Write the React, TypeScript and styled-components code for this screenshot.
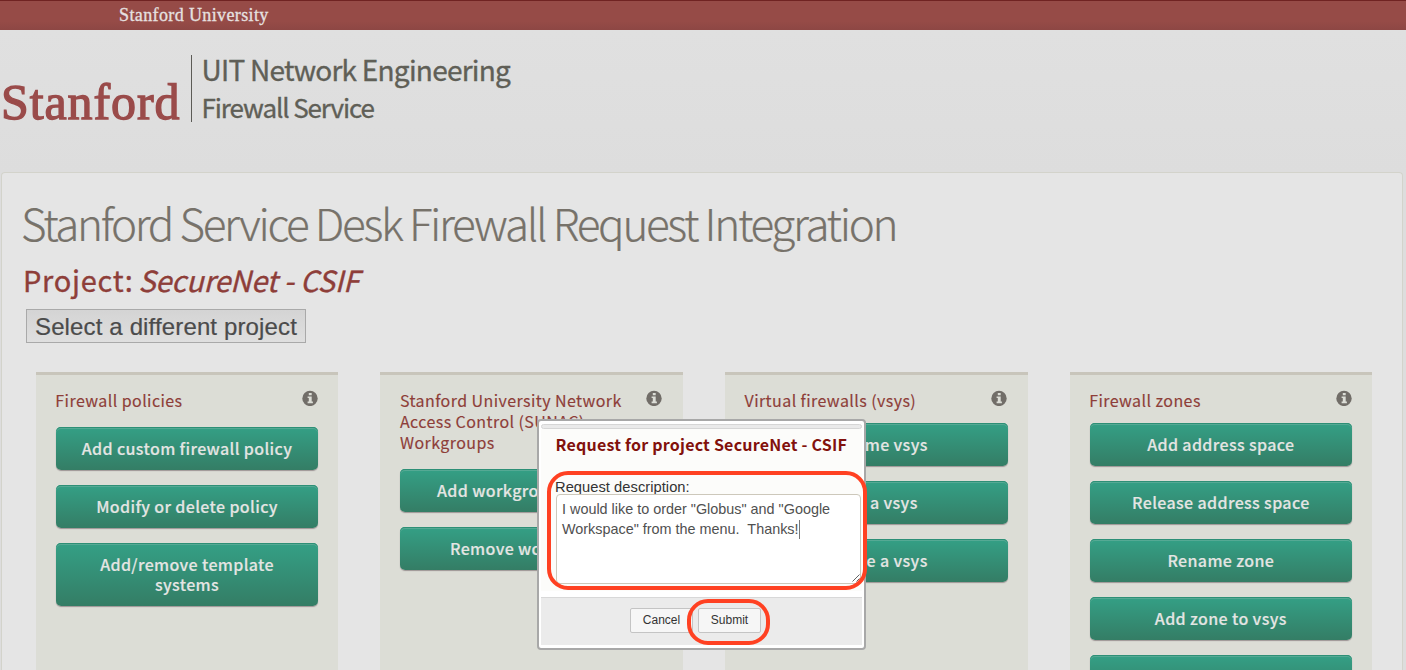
import React from 'react';
import styled, { createGlobalStyle } from 'styled-components';

const sans = `"Noto Sans CJK SC", "Noto Sans CJK JP", "Noto Sans", sans-serif`;
const helvetica = `"Liberation Sans", Arial, sans-serif`;
const serif = `"Liberation Serif", "Times New Roman", serif`;

const GlobalStyle = createGlobalStyle`
  *, *::before, *::after { box-sizing: border-box; }
  html, body { margin: 0; height: 100%; overflow: hidden; background: #dfdfdf; }
`;

const Page = styled.div`
  position: relative;
  width: 1406px;
  height: 670px;
  overflow: hidden;
  display: flex;
  flex-direction: column;
  font-family: ${sans};
  background: linear-gradient(#e0e0e0 30px, #dddddd 172px);
`;

const BrandBar = styled.div`
  flex: none;
  height: 30px;
  padding-left: 119px;
  border-top: 1px solid #702322;
  background: linear-gradient(#964b47 70%, #8d4744);
  color: #e6e1e0;
  font: 18px/29px ${serif};
  letter-spacing: 0.38px;
  -webkit-text-stroke: 0.3px #e6e1e0;
`;

const Header = styled.header`
  flex: none;
  height: 142px;
  padding: 25px 0 0 1px;
  display: flex;
  align-items: flex-start;
`;

const Wordmark = styled.div`
  width: 190px;
  padding-top: 19px;
  font: 50px/56px ${serif};
  letter-spacing: 0.9px;
  color: #9a4b4a;
  -webkit-text-stroke: 1.3px #9a4b4a;
  white-space: nowrap;
`;

const Lockup = styled.div`
  height: 67px;
  padding-left: 9.6px;
  border-left: 1px solid #5c5b56;
  color: #605f57;
  -webkit-text-stroke: 0.35px #605f57;
  white-space: nowrap;
`;

const SiteName = styled.div`
  font-size: 28px;
  line-height: 28px;
  letter-spacing: -0.76px;
`;

const SiteSub = styled.div`
  padding-top: 7px;
  font-size: 26px;
  line-height: 34px;
  letter-spacing: -1.12px;
`;

const Main = styled.main`
  flex: 1;
  margin: 0 3px 0 1px;
  padding: 21px 0 0 19px;
  border: 1px solid #d3d3cb;
  border-bottom: 0;
  border-radius: 4px 4px 0 0;
  background: #e5e5e5;
  display: flex;
  flex-direction: column;
  align-items: flex-start;
`;

const Title = styled.h1`
  margin: 0;
  font-size: 44px;
  line-height: 56px;
  font-weight: 300;
  letter-spacing: -2.32px;
  color: #77726a;
  -webkit-text-stroke: 0.2px #77726a;
  white-space: nowrap;
`;

const Project = styled.h2`
  margin: 9px 0 0 2px;
  font-size: 29px;
  line-height: 40px;
  font-weight: 400;
  letter-spacing: 0.72px;
  color: #8e3e39;
  -webkit-text-stroke: 0.35px #8e3e39;
  white-space: nowrap;

  em {
    margin-left: -2.6px;
    letter-spacing: -0.14px;
  }
`;

const SelectButton = styled.button`
  margin: 10px 0 0 5px;
  width: 280px;
  height: 34px;
  padding: 2px 0 0;
  border: 1px solid #a9a9a9;
  background: linear-gradient(#d4d4d4, #dfdfdf);
  color: #4b4b4b;
  font: 24px/30px ${helvetica};
  letter-spacing: 0.14px;
  -webkit-text-stroke: 0.2px #4b4b4b;
  white-space: nowrap;
`;

const Cards = styled.div`
  flex: 1;
  margin: 29px 0 0 14.75px;
  display: grid;
  grid-template-columns: repeat(4, 302.6px);
  gap: 42px;
`;

const Card = styled.section`
  padding: 15px 20px 0;
  border-top: 3px solid #c8c5bb;
  background: #dcddd6;
`;

const CardHead = styled.div<{ $gap: number }>`
  display: flex;
  justify-content: space-between;
  align-items: flex-start;
  margin-bottom: ${p => p.$gap}px;
`;

const CardTitle = styled.h3`
  margin: 0 0 0 -0.4px;
  width: 236px;
  font-size: 16px;
  line-height: 21px;
  font-weight: 400;
  letter-spacing: 0.42px;
  color: #8e3e39;
  -webkit-text-stroke: 0.15px #8e3e39;
`;

const Info = styled.svg`
  flex: none;
  width: 16px;
  height: 16px;
  margin-right: 0.6px;
`;

const Action = styled.button`
  display: block;
  width: 100%;
  margin: 0 0 15px;
  padding: 11px 22px 12px;
  border: 0;
  border-radius: 5px;
  background: linear-gradient(#349e84 5%, #347d65);
  box-shadow: inset 0 1px 0 #2d8f76, inset 0 2px 0 #55a994, 0 1px 1px rgba(80, 60, 70, 0.45);
  color: #e4e5e3;
  font-family: ${sans};
  font-size: 16px;
  line-height: 20px;
  font-weight: 500;
  letter-spacing: 0.36px;
  -webkit-text-stroke: 0.15px #e4e5e3;
`;

const Dialog = styled.div`
  position: absolute;
  left: 537px;
  top: 419px;
  width: 329px;
  height: 231px;
  padding: 3px 2px;
  border: 2px solid #a8a8a8;
  border-radius: 4px;
  background: #fff;
  display: flex;
  flex-direction: column;
`;

const DragBar = styled.div`
  height: 5px;
  border: 1px solid #d6d6d6;
  border-radius: 4px;
  background: #eaeaea;
`;

const DialogBody = styled.div`
  height: 162px;
  padding: 4px 1px 0 15px;
  background: #fcfcfa;
`;

const DialogTitle = styled.h4`
  margin: 0 0 25px -0.5px;
  font-size: 16px;
  line-height: 22px;
  font-weight: 700;
  letter-spacing: 0.22px;
  color: #82110c;
  white-space: nowrap;
`;

const Label = styled.label`
  display: block;
  height: 14px;
  margin-left: -1px;
  font: 14.7px/15px ${helvetica};
  letter-spacing: 0.04px;
  color: #333;
`;

const Field = styled.div`
  position: relative;
  height: 90px;
  padding: 4px 5px;
  border: 1px solid #cdc8bb;
  border-radius: 4px;
  background: #fff;
  color: #505050;
  font: 14.4px/20px ${helvetica};
  white-space: pre;
`;

const Caret = styled.span`
  display: inline-block;
  width: 1px;
  height: 19px;
  vertical-align: -5px;
  background: #777;
`;

const Grip = styled.svg`
  position: absolute;
  right: 0;
  bottom: 1px;
  width: 8px;
  height: 8px;
`;

const DialogFooter = styled.div`
  height: 48px;
  margin-top: 6px;
  padding: 10px 0 0 89px;
  border-top: 1px solid #d8d8d8;
  background: #ebebeb;
  display: flex;
  gap: 5px;
`;

const SmallButton = styled.button`
  width: 63px;
  height: 25px;
  padding: 0 0 1px;
  border: 1px solid #c4c4c4;
  border-radius: 2px;
  background: #f6f6f6;
  color: #333;
  font: 12px/20px ${helvetica};
`;

const Highlight = styled.div<{ $x: number; $y: number; $w: number; $h: number }>`
  position: absolute;
  left: ${p => p.$x}px;
  top: ${p => p.$y}px;
  width: ${p => p.$w}px;
  height: ${p => p.$h}px;
  border: 4px solid #ff4122;
  border-radius: 21px;
`;

const groups = [
  { title: 'Firewall policies', gap: 16, actions: ['Add custom firewall policy', 'Modify or delete policy', 'Add/remove template systems'] },
  { title: 'Stanford University Network Access Control (SUNAC) Workgroups', gap: 16, actions: ['Add workgroups to vsys', 'Remove workgroups'] },
  { title: 'Virtual firewalls (vsys)', gap: 12, actions: ['Rename vsys', 'Add a vsys', 'Delete a vsys'] },
  { title: 'Firewall zones', gap: 12, actions: ['Add address space', 'Release address space', 'Rename zone', 'Add zone to vsys', 'Delete zone'] },
];

const InfoIcon = () => (
  <Info viewBox="0 0 16 16">
    <circle cx="8" cy="8.4" r="7.7" fill="#716d68" />
    <path d="M6.8 3h2.9v2.3H6.8zM5.6 6.5h4.1v5.1h1.2v1.6H5.6v-1.6h1.2V8.1H5.6z" fill="#dcddd6" />
  </Info>
);

export default function App() {
  return (
    <>
      <GlobalStyle />
      <Page>
        <BrandBar>Stanford University</BrandBar>
        <Header>
          <Wordmark>Stanford</Wordmark>
          <Lockup>
            <SiteName>UIT Network Engineering</SiteName>
            <SiteSub>Firewall Service</SiteSub>
          </Lockup>
        </Header>
        <Main>
          <Title>Stanford Service Desk Firewall Request Integration</Title>
          <Project>Project: <em>SecureNet - CSIF</em></Project>
          <SelectButton>Select a different project</SelectButton>
          <Cards>
            {groups.map(g => (
              <Card key={g.title}>
                <CardHead $gap={g.gap}>
                  <CardTitle>{g.title}</CardTitle>
                  <InfoIcon />
                </CardHead>
                {g.actions.map(a => <Action key={a}>{a}</Action>)}
              </Card>
            ))}
          </Cards>
        </Main>
        <Dialog>
          <DragBar />
          <DialogBody>
            <DialogTitle>Request for project SecureNet - CSIF</DialogTitle>
            <Label>Request description:</Label>
            <Field>
              {'I would like to order "Globus" and "Google\nWorkspace" from the menu.  Thanks!'}
              <Caret />
              <Grip viewBox="0 0 8 8" stroke="#555" strokeWidth="0.9">
                <path d="M0.5 7.5L7.5 0.5M4.5 7.5L7.5 4.5" />
              </Grip>
            </Field>
          </DialogBody>
          <DialogFooter>
            <SmallButton>Cancel</SmallButton>
            <SmallButton>Submit</SmallButton>
          </DialogFooter>
        </Dialog>
        <Highlight $x={547} $y={471} $w={320} $h={119} />
        <Highlight $x={687} $y={599} $w={83} $h={46} />
      </Page>
    </>
  );
}
